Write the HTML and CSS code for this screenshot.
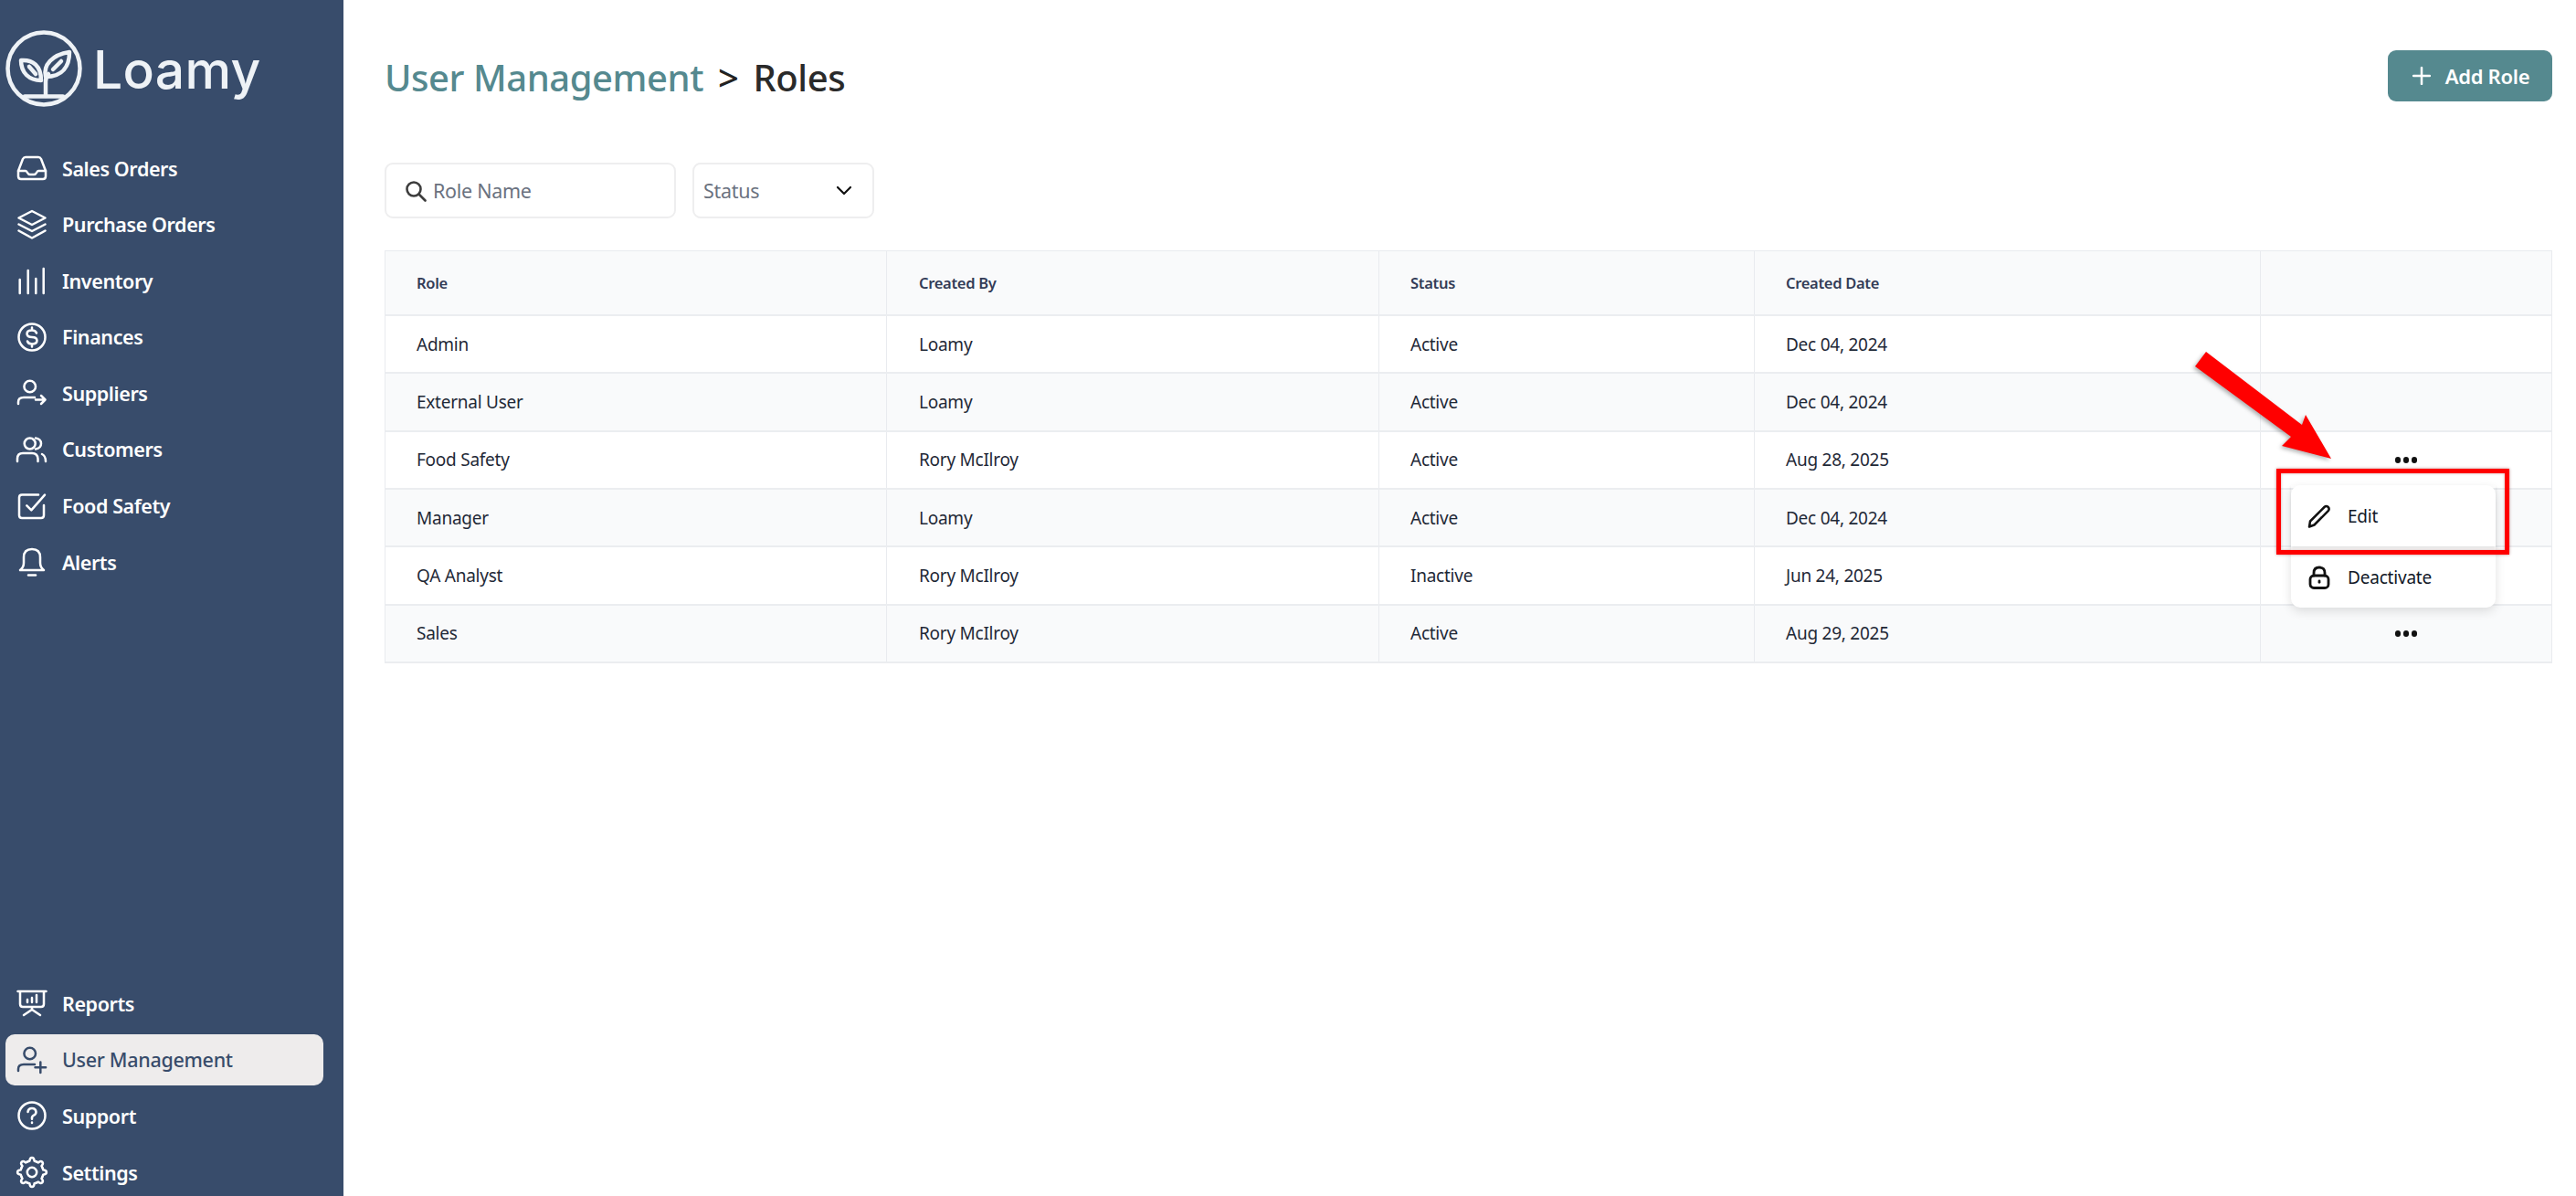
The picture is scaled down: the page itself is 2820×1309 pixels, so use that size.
FILE: index.html
```html
<!DOCTYPE html>
<html lang="en">
<head>
<meta charset="utf-8">
<title>Roles</title>
<link rel="stylesheet" href="styles.css">
</head>
<body>
<div class="app">
  <aside class="sidebar">
    <div class="brand">
      <svg class="brand-mark" viewBox="0 0 96 96" fill="none" stroke="#eef2f6" stroke-width="4.500" stroke-linecap="round" stroke-linejoin="round">
        <circle cx="48" cy="48" r="39.500"/>
        <path d="M27 78.500h42"/>
        <path d="M50 78V62c0-4 1-6 3-8"/>
        <path d="M50 57c-3-13 7-24 26-27 0 15-7 27-26 27z"/>
        <path d="M58 49l9-9"/>
        <path d="M23 39c13-1 22 6 22 22-13 0-22-8-22-22z"/>
        <path d="M32 46l7 8"/>
      </svg>
      <span class="brand-name">Loamy</span>
    </div>
    <nav class="nav">
      <a class="nav-item"><svg class="ico" viewBox="0 0 36 36"><path d="M3 21 8 8q1-2 3-2h14q2 0 3 2l5 13v6q0 3-3 3H6q-3 0-3-3z"/><path d="M3 21h8q1 0 2 2t3 2h4q2 0 3-2t2-2h8"/></svg><span>Sales Orders</span></a>
      <a class="nav-item"><svg class="ico" viewBox="0 0 36 36"><path d="M18 3 32.500 10.500 18 18 3.500 10.500z"/><path d="M3.500 17.500 18 25l14.500-7.500"/><path d="M3.500 24.500 18 32.500l14.500-8"/></svg><span>Purchase Orders</span></a>
      <a class="nav-item"><svg class="ico" viewBox="0 0 36 36"><path d="M4.700 17v15M13.700 7v25M22.300 16v16M30.700 5v27"/></svg><span>Inventory</span></a>
      <a class="nav-item"><svg class="ico" viewBox="0 0 36 36"><circle cx="18" cy="18" r="14.500"/><path d="M23 13.500q-1-3-5-3-5.500 0-5.500 3.700t5.500 3.800 5.500 3.800-5.500 3.700q-4 0-5-3M18 7.500v3M18 25.500v3"/></svg><span>Finances</span></a>
      <a class="nav-item"><svg class="ico" viewBox="0 0 36 36"><circle cx="15.700" cy="11" r="6.300"/><path d="M3 30v-2q0-5 6-5h12M22 25.500h10.500M28 21l4.500 4.500L28 30"/></svg><span>Suppliers</span></a>
      <a class="nav-item"><svg class="ico" viewBox="0 0 36 36"><circle cx="15.700" cy="11.500" r="6"/><path d="M2 31v-3q0-6 6-6h10q6 0 6.500 6v3M22 5.500q6 1 6 6t-6 6M29 23q4 2 4 8"/></svg><span>Customers</span></a>
      <a class="nav-item"><svg class="ico" viewBox="0 0 36 36"><path d="M25 5.500H7q-3 0-3 3V28q0 3 3 3h21q3 0 3-3V17"/><path d="m12.300 17.300 5 5L32 5.700"/></svg><span>Food Safety</span></a>
      <a class="nav-item"><svg class="ico" viewBox="0 0 36 36"><path d="M18 4q-9 0-9 9v6q0 5-4 8h26q-4-3-4-8v-6q0-9-9-9z"/><path d="M14 32.500h8"/></svg><span>Alerts</span></a>
    </nav>
    <nav class="nav">
      <a class="nav-item"><svg class="ico" viewBox="0 0 36 36"><path d="M2.500 5h31M5 5v14q0 3 3 3h20q3 0 3-3V5M13 14v3M18 12v5M23 9v8M18 22v3M9 31l9-6 9 6"/></svg><span>Reports</span></a>
      <a class="nav-item is-active"><svg class="ico" viewBox="0 0 36 36"><circle cx="15.700" cy="11" r="6.300"/><path d="M3 30v-2q0-5 6-5h12M27.300 20.500v11.600M21.500 26.300h11.600"/></svg><span>User Management</span></a>
      <a class="nav-item"><svg class="ico" viewBox="0 0 36 36"><circle cx="18" cy="18" r="14.500"/><path d="M13.500 14q.5-4 4.500-4t4.500 4q0 2.500-2.500 3.700t-2 4"/><path d="M18 25.500v.6"/></svg><span>Support</span></a>
      <a class="nav-item"><svg class="ico" viewBox="-18 -18 36 36"><defs><path id="tooth" d="M-4.780-11.550Q-3.700-12-2.600-12.230C-2.300-13.500-2.600-15.900 0-15.900S2.300-13.500 2.600-12.230Q3.700-12 4.780-11.550"/></defs><use href="#tooth"/><use href="#tooth" transform="rotate(45)"/><use href="#tooth" transform="rotate(90)"/><use href="#tooth" transform="rotate(135)"/><use href="#tooth" transform="rotate(180)"/><use href="#tooth" transform="rotate(225)"/><use href="#tooth" transform="rotate(270)"/><use href="#tooth" transform="rotate(315)"/><circle r="5.200"/></svg><span>Settings</span></a>
    </nav>
  </aside>

  <main class="main">
    <header class="page-head">
      <h1 class="crumbs"><span class="crumb-link">User Management</span><span class="crumb-sep">&gt;</span><span class="crumb-now">Roles</span></h1>
      <button class="add-btn"><svg class="add-ico" viewBox="0 0 20 20"><path d="M10 1v18M1 10h18"/></svg>Add Role</button>
    </header>

    <div class="filters">
      <div class="search">
        <svg class="search-ico" viewBox="0 0 24 24"><circle cx="10" cy="10" r="7.500"/><path d="m15.500 15.500 7 7"/></svg>
        <span>Role Name</span>
      </div>
      <div class="select">
        <span>Status</span>
        <svg class="chev" viewBox="0 0 18 12"><path d="m2 2 7 7 7-7"/></svg>
      </div>
    </div>

    <div class="table">
      <div class="row row-head"><div class="cell">Role</div><div class="cell">Created By</div><div class="cell">Status</div><div class="cell">Created Date</div><div class="cell"></div></div>
      <div class="row"><div class="cell">Admin</div><div class="cell">Loamy</div><div class="cell">Active</div><div class="cell">Dec 04, 2024</div><div class="cell"></div></div>
      <div class="row row-alt"><div class="cell">External User</div><div class="cell">Loamy</div><div class="cell">Active</div><div class="cell">Dec 04, 2024</div><div class="cell"></div></div>
      <div class="row"><div class="cell">Food Safety</div><div class="cell">Rory McIlroy</div><div class="cell">Active</div><div class="cell">Aug 28, 2025</div><div class="cell cell-act"><span class="dots"><i></i><i></i><i></i></span></div></div>
      <div class="row row-alt"><div class="cell">Manager</div><div class="cell">Loamy</div><div class="cell">Active</div><div class="cell">Dec 04, 2024</div><div class="cell"></div></div>
      <div class="row"><div class="cell">QA Analyst</div><div class="cell">Rory McIlroy</div><div class="cell">Inactive</div><div class="cell">Jun 24, 2025</div><div class="cell"></div></div>
      <div class="row row-alt"><div class="cell">Sales</div><div class="cell">Rory McIlroy</div><div class="cell">Active</div><div class="cell">Aug 29, 2025</div><div class="cell cell-act"><span class="dots"><i></i><i></i><i></i></span></div></div>
    </div>
  </main>
</div>

<div class="menu">
  <div class="menu-item menu-edit"><svg class="menu-ico" viewBox="0 0 26 26"><path d="M2 24.500l1-6L18.500 3q2-2 4-.2t.5 4L7.500 22.500z"/></svg><span>Edit</span></div>
  <div class="menu-item"><svg class="menu-ico menu-ico-lock" viewBox="0 0 26 26"><rect x="3" y="11" width="20" height="13.500" rx="4"/><path d="M7 11V8q0-6 6-6t6 6v3"/><path d="M13 16.800v1.500"/></svg><span>Deactivate</span></div>
</div>
<div class="callout-box"></div>
<svg class="callout-arrow" viewBox="0 0 170 130"><polygon points="15,5 120,85 124,74 152,122 98,108 108,98 3,21"/></svg>
</body>
</html>
```
FILE: styles.css
```css
* { box-sizing: border-box; }
html, body { margin: 0; height: 100%; overflow: hidden; background: #fff; }
body { font-family: "Noto Sans", "Open Sans", sans-serif; color: #1f2937; }

.app { display: flex; height: 1309px; }

.sidebar {
  width: 376px;
  flex: none;
  background: #384c6b;
  display: flex;
  flex-direction: column;
  padding: 27px 22px 0 6px;
}
.brand { display: flex; align-items: center; height: 96px; margin: 0 0 33px -6px; }
.brand-mark { width: 96px; height: 96px; flex: none; }
.brand-name {
  font-family: "Inter", sans-serif;
  font-size: 57px;
  font-weight: 500;
  color: #eef2f6;
  letter-spacing: .3px;
  margin: 3px 0 0 6px;
  line-height: 1;
}
.nav { display: flex; flex-direction: column; gap: 5.600px; }
.nav:last-child { margin-top: auto; margin-bottom: -2px; }
.nav-item {
  display: flex;
  align-items: center;
  height: 56px;
  padding-left: 11px;
  gap: 15px;
  border-radius: 10px;
  color: #fff;
  font-size: 21.500px;
  font-weight: 600;
  letter-spacing: -.4px;
}
.ico {
  width: 36px;
  height: 36px;
  flex: none;
  fill: none;
  stroke: currentColor;
  stroke-width: 2.500;
  stroke-linecap: round;
  stroke-linejoin: round;
}
.nav-item.is-active { background: #eeecec; color: #384c6b; font-weight: 500; letter-spacing: -.3px; }

.main { flex: 1; padding: 55px 26px 0 45px; min-width: 0; }
.page-head { display: flex; justify-content: space-between; align-items: center; height: 56px; }
.crumbs { margin: 2px 0 0; font-size: 40px; font-weight: 500; display: flex; gap: 16px; letter-spacing: -.45px; }
.crumb-link { color: #55898f; }
.crumb-sep { color: #222; }
.crumb-now { color: #2a2a2a; }
.add-btn {
  width: 180px;
  height: 56px;
  border: 0;
  border-radius: 9px;
  background: #55898f;
  color: #fff;
  font: 600 22px "Noto Sans", sans-serif;
  letter-spacing: -.3px;
  display: flex;
  align-items: center;
  justify-content: center;
  gap: 16px;
  padding: 0 0 0 2px;
}
.add-ico { width: 20px; height: 20px; fill: none; stroke: #fff; stroke-width: 2.500; stroke-linecap: round; }

.filters { display: flex; gap: 18px; margin-top: 67px; }
.search, .select {
  height: 61px;
  border: 2px solid #eeeeef;
  border-radius: 9px;
  display: flex;
  align-items: center;
  font-size: 21.500px;
  color: #6b7280;
  letter-spacing: -.3px;
}
.search { width: 319px; padding-left: 20px; gap: 7px; }
.select { width: 199px; padding: 0 22px 0 10px; justify-content: space-between; }
.search-ico { width: 24px; height: 24px; fill: none; stroke: #3d3d3d; stroke-width: 2.600; stroke-linecap: round; }
.chev { width: 18px; height: 12px; fill: none; stroke: #111; stroke-width: 2.200; stroke-linecap: round; stroke-linejoin: round; }

.table { margin-top: 35px; border: 1px solid #e9ebef; border-bottom: 0; }
.row {
  display: grid;
  grid-template-columns: 549px 539px 411px 554px 1fr;
  height: 63.330px;
  border-bottom: 2px solid #ebedf0;
  font-size: 19px;
  letter-spacing: -.25px;
  color: #1f2937;
}
.row-head { height: 71px; background: #f9fafb; font-size: 16.500px; font-weight: 600; color: #333c57; letter-spacing: -.3px; }
.row-alt { background: #f9fafb; }
.cell { display: flex; align-items: center; padding-left: 34px; border-right: 1px solid #e9ebef; }
.cell:nth-child(2) { padding-left: 35px; }
.cell:last-child { border-right: 0; }
.cell-act { justify-content: center; padding-left: 0; }
.dots { display: flex; gap: 2.500px; }
.dots i { width: 6.500px; height: 6.500px; border-radius: 50%; background: #111; }

.menu {
  position: absolute;
  left: 2508px;
  top: 531px;
  width: 224px;
  height: 134px;
  background: #fff;
  border-radius: 10px;
  box-shadow: 0 4px 12px rgba(0, 0, 0, .12);
  display: flex;
  flex-direction: column;
}
.menu-item {
  flex: 1;
  display: flex;
  align-items: center;
  padding-left: 18px;
  gap: 18px;
  font-size: 19px;
  letter-spacing: -.2px;
  color: #111827;
}
.menu-edit { box-shadow: 0 2px 3px rgba(0, 0, 0, .12); position: relative; }
.menu-ico { width: 26px; height: 26px; flex: none; fill: none; stroke: #111; stroke-width: 2.500; stroke-linecap: round; stroke-linejoin: round; }
.menu-ico-lock { stroke-width: 2.800; }

.callout-box {
  position: absolute;
  left: 2492px;
  top: 513px;
  width: 255px;
  height: 94px;
  border: 5px solid #f00;
  box-shadow: 0 0 3px rgba(120, 0, 0, .45), inset 0 0 3px rgba(120, 0, 0, .35);
}
.callout-arrow {
  position: absolute;
  left: 2400px;
  top: 380px;
  width: 170px;
  height: 130px;
  fill: #f00;
  filter: drop-shadow(-2px 2px 2px rgba(0, 0, 0, .3));
}
```
